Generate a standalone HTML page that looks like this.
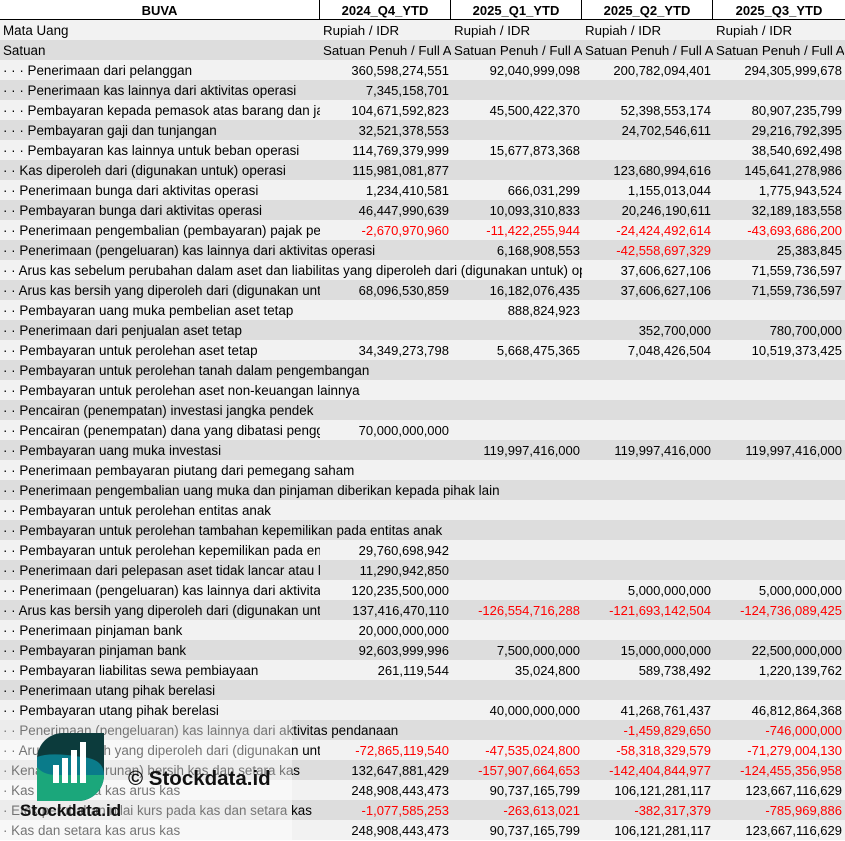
<!DOCTYPE html>
<html><head><meta charset="utf-8"><style>
*{margin:0;padding:0;box-sizing:border-box}
body{width:845px;height:841px;overflow:hidden;background:#fff;font-family:"Liberation Sans",sans-serif;font-size:13px;color:#000;position:relative}
.h{position:absolute;top:0;left:0;width:845px;height:21px;border-bottom:2px solid #000;background:#fff;font-weight:bold}
.h div{position:absolute;top:0;height:19px;line-height:21px;text-align:center;border-right:1px solid #000}
.r{position:absolute;left:0;width:845px;height:20px;line-height:21px;background:#f2f2f2;white-space:nowrap}
.r.d{background:#dddddd}
.l{position:absolute;left:3px;top:0;width:317px;overflow:hidden;font-size:13.4px}
.c{position:absolute;top:0;width:131px;text-align:right;padding-right:2px;overflow:hidden}
.t{position:absolute;top:0;width:131px;text-align:left;padding-left:3px;overflow:hidden;font-size:13.3px}
.a{left:320px}.b{left:451px}.e{left:582px}.f{left:713px}
.n{color:#ff0000}
.wm{position:absolute;left:0;top:720px;width:292px;height:121px;background:rgba(255,255,255,0.45)}
</style></head><body>
<div class="h"><div style="left:0;width:320px">BUVA</div><div style="left:320px;width:131px">2024_Q4_YTD</div><div style="left:451px;width:131px">2025_Q1_YTD</div><div style="left:582px;width:131px">2025_Q2_YTD</div><div style="left:713px;width:132px;border-right:none">2025_Q3_YTD</div></div>

<div class="r" style="top:20px"><span class="l">Mata Uang</span><span class="t a">Rupiah / IDR</span><span class="t b">Rupiah / IDR</span><span class="t e">Rupiah / IDR</span><span class="t f">Rupiah / IDR</span></div>
<div class="r d" style="top:40px"><span class="l">Satuan</span><span class="t a">Satuan Penuh / Full Amount</span><span class="t b">Satuan Penuh / Full Amount</span><span class="t e">Satuan Penuh / Full Amount</span><span class="t f">Satuan Penuh / Full Amount</span></div>

<div class="r" style="top:60px"><span class="l">· · · Penerimaan dari pelanggan</span><span class="c a">360,598,274,551</span><span class="c b">92,040,999,098</span><span class="c e">200,782,094,401</span><span class="c f">294,305,999,678</span></div>
<div class="r d" style="top:80px"><span class="l">· · · Penerimaan kas lainnya dari aktivitas operasi</span><span class="c a">7,345,158,701</span></div>
<div class="r" style="top:100px"><span class="l">· · · Pembayaran kepada pemasok atas barang dan jasa</span><span class="c a">104,671,592,823</span><span class="c b">45,500,422,370</span><span class="c e">52,398,553,174</span><span class="c f">80,907,235,799</span></div>
<div class="r d" style="top:120px"><span class="l">· · · Pembayaran gaji dan tunjangan</span><span class="c a">32,521,378,553</span><span class="c e">24,702,546,611</span><span class="c f">29,216,792,395</span></div>
<div class="r" style="top:140px"><span class="l">· · · Pembayaran kas lainnya untuk beban operasi</span><span class="c a">114,769,379,999</span><span class="c b">15,677,873,368</span><span class="c f">38,540,692,498</span></div>
<div class="r d" style="top:160px"><span class="l">· · Kas diperoleh dari (digunakan untuk) operasi</span><span class="c a">115,981,081,877</span><span class="c e">123,680,994,616</span><span class="c f">145,641,278,986</span></div>
<div class="r" style="top:180px"><span class="l">· · Penerimaan bunga dari aktivitas operasi</span><span class="c a">1,234,410,581</span><span class="c b">666,031,299</span><span class="c e">1,155,013,044</span><span class="c f">1,775,943,524</span></div>
<div class="r d" style="top:200px"><span class="l">· · Pembayaran bunga dari aktivitas operasi</span><span class="c a">46,447,990,639</span><span class="c b">10,093,310,833</span><span class="c e">20,246,190,611</span><span class="c f">32,189,183,558</span></div>
<div class="r" style="top:220px"><span class="l">· · Penerimaan pengembalian (pembayaran) pajak penghasilan</span><span class="c a n">-2,670,970,960</span><span class="c b n">-11,422,255,944</span><span class="c e n">-24,424,492,614</span><span class="c f n">-43,693,686,200</span></div>
<div class="r d" style="top:240px"><span class="l" style="width:448px">· · Penerimaan (pengeluaran) kas lainnya dari aktivitas operasi</span><span class="c b">6,168,908,553</span><span class="c e n">-42,558,697,329</span><span class="c f">25,383,845</span></div>
<div class="r" style="top:260px"><span class="l" style="width:579px">· · Arus kas sebelum perubahan dalam aset dan liabilitas yang diperoleh dari (digunakan untuk) operasi</span><span class="c e">37,606,627,106</span><span class="c f">71,559,736,597</span></div>
<div class="r d" style="top:280px"><span class="l">· · Arus kas bersih yang diperoleh dari (digunakan untuk) aktivitas operasi</span><span class="c a">68,096,530,859</span><span class="c b">16,182,076,435</span><span class="c e">37,606,627,106</span><span class="c f">71,559,736,597</span></div>
<div class="r" style="top:300px"><span class="l" style="width:448px">· · Pembayaran uang muka pembelian aset tetap</span><span class="c b">888,824,923</span></div>
<div class="r d" style="top:320px"><span class="l" style="width:448px">· · Penerimaan dari penjualan aset tetap</span><span class="c e">352,700,000</span><span class="c f">780,700,000</span></div>
<div class="r" style="top:340px"><span class="l">· · Pembayaran untuk perolehan aset tetap</span><span class="c a">34,349,273,798</span><span class="c b">5,668,475,365</span><span class="c e">7,048,426,504</span><span class="c f">10,519,373,425</span></div>
<div class="r d" style="top:360px"><span class="l" style="width:840px">· · Pembayaran untuk perolehan tanah dalam pengembangan</span></div>
<div class="r" style="top:380px"><span class="l" style="width:840px">· · Pembayaran untuk perolehan aset non-keuangan lainnya</span></div>
<div class="r d" style="top:400px"><span class="l" style="width:840px">· · Pencairan (penempatan) investasi jangka pendek</span></div>
<div class="r" style="top:420px"><span class="l">· · Pencairan (penempatan) dana yang dibatasi penggunaannya</span><span class="c a">70,000,000,000</span></div>
<div class="r d" style="top:440px"><span class="l">· · Pembayaran uang muka investasi</span><span class="c b">119,997,416,000</span><span class="c e">119,997,416,000</span><span class="c f">119,997,416,000</span></div>
<div class="r" style="top:460px"><span class="l" style="width:840px">· · Penerimaan pembayaran piutang dari pemegang saham</span></div>
<div class="r d" style="top:480px"><span class="l" style="width:840px">· · Penerimaan pengembalian uang muka dan pinjaman diberikan kepada pihak lain</span></div>
<div class="r" style="top:500px"><span class="l" style="width:840px">· · Pembayaran untuk perolehan entitas anak</span></div>
<div class="r d" style="top:520px"><span class="l" style="width:840px">· · Pembayaran untuk perolehan tambahan kepemilikan pada entitas anak</span></div>
<div class="r" style="top:540px"><span class="l">· · Pembayaran untuk perolehan kepemilikan pada entitas asosiasi</span><span class="c a">29,760,698,942</span></div>
<div class="r d" style="top:560px"><span class="l">· · Penerimaan dari pelepasan aset tidak lancar atau kelompok lepasan</span><span class="c a">11,290,942,850</span></div>
<div class="r" style="top:580px"><span class="l">· · Penerimaan (pengeluaran) kas lainnya dari aktivitas investasi</span><span class="c a">120,235,500,000</span><span class="c e">5,000,000,000</span><span class="c f">5,000,000,000</span></div>
<div class="r d" style="top:600px"><span class="l">· · Arus kas bersih yang diperoleh dari (digunakan untuk) aktivitas investasi</span><span class="c a">137,416,470,110</span><span class="c b n">-126,554,716,288</span><span class="c e n">-121,693,142,504</span><span class="c f n">-124,736,089,425</span></div>
<div class="r" style="top:620px"><span class="l">· · Penerimaan pinjaman bank</span><span class="c a">20,000,000,000</span></div>
<div class="r d" style="top:640px"><span class="l">· · Pembayaran pinjaman bank</span><span class="c a">92,603,999,996</span><span class="c b">7,500,000,000</span><span class="c e">15,000,000,000</span><span class="c f">22,500,000,000</span></div>
<div class="r" style="top:660px"><span class="l">· · Pembayaran liabilitas sewa pembiayaan</span><span class="c a">261,119,544</span><span class="c b">35,024,800</span><span class="c e">589,738,492</span><span class="c f">1,220,139,762</span></div>
<div class="r d" style="top:680px"><span class="l" style="width:840px">· · Penerimaan utang pihak berelasi</span></div>
<div class="r" style="top:700px"><span class="l">· · Pembayaran utang pihak berelasi</span><span class="c b">40,000,000,000</span><span class="c e">41,268,761,437</span><span class="c f">46,812,864,368</span></div>
<div class="r d" style="top:720px"><span class="l" style="width:579px">· · Penerimaan (pengeluaran) kas lainnya dari aktivitas pendanaan</span><span class="c e n">-1,459,829,650</span><span class="c f n">-746,000,000</span></div>
<div class="r" style="top:740px"><span class="l">· · Arus kas bersih yang diperoleh dari (digunakan untuk) aktivitas pendanaan</span><span class="c a n">-72,865,119,540</span><span class="c b n">-47,535,024,800</span><span class="c e n">-58,318,329,579</span><span class="c f n">-71,279,004,130</span></div>
<div class="r d" style="top:760px"><span class="l">· Kenaikan (penurunan) bersih kas dan setara kas</span><span class="c a">132,647,881,429</span><span class="c b n">-157,907,664,653</span><span class="c e n">-142,404,844,977</span><span class="c f n">-124,455,356,958</span></div>
<div class="r" style="top:780px"><span class="l">· Kas dan setara kas arus kas</span><span class="c a">248,908,443,473</span><span class="c b">90,737,165,799</span><span class="c e">106,121,281,117</span><span class="c f">123,667,116,629</span></div>
<div class="r d" style="top:800px"><span class="l">· Efek perubahan nilai kurs pada kas dan setara kas</span><span class="c a n">-1,077,585,253</span><span class="c b n">-263,613,021</span><span class="c e n">-382,317,379</span><span class="c f n">-785,969,886</span></div>
<div class="r" style="top:820px"><span class="l">· Kas dan setara kas arus kas</span><span class="c a">248,908,443,473</span><span class="c b">90,737,165,799</span><span class="c e">106,121,281,117</span><span class="c f">123,667,116,629</span></div>

<div class="wm"></div>
<svg style="position:absolute;left:37px;top:733px" width="67" height="68" viewBox="0 0 67 68">
<defs><clipPath id="cp"><path d="M26 0 H67 V42 A26 26 0 0 1 41 68 H0 V26 A26 26 0 0 1 26 0 Z"/></clipPath></defs>
<g clip-path="url(#cp)">
<rect width="67" height="68" fill="#0c3b3c"/>
<path d="M0 24 Q10 20 30 22 L45 24 Q67 26 67 42 L67 68 L0 68 Z" fill="#0a7b8a"/>
<path d="M0 42 L67 42 L67 68 L0 68 Z" fill="#1ba77b"/>
<path d="M0 34 Q6 42 20 42 L0 42 Z" fill="#1ba77b"/>
</g>
<rect x="16" y="32" width="6" height="18" fill="#fff"/>
<rect x="25" y="25" width="6" height="25" fill="#fff"/>
<rect x="34" y="17" width="6" height="33" fill="#fff"/>
<rect x="43" y="9" width="6" height="41" fill="#fff"/>
</svg>
<div style="position:absolute;left:128px;top:767px;font-size:20.5px;font-weight:bold;color:#111;white-space:nowrap">© Stockdata.id</div>
<div style="position:absolute;left:20px;top:801px;font-size:17px;font-weight:bold;color:#111;white-space:nowrap">Stockdata.id</div>
</body></html>
